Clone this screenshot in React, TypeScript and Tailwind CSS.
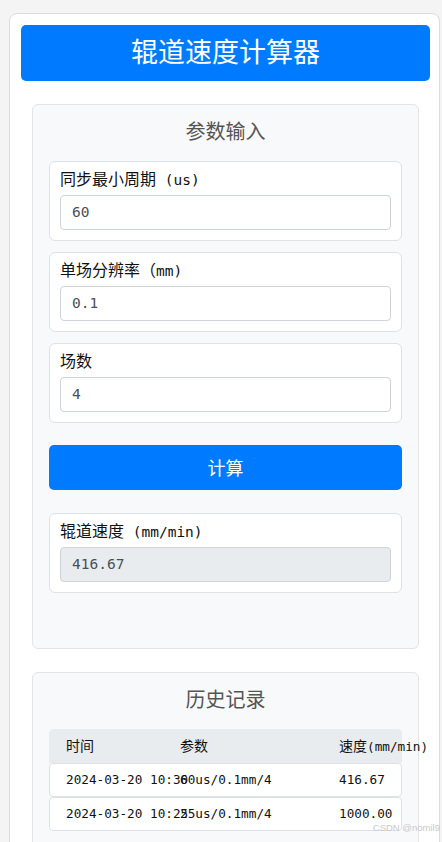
import React from "react";

const CJK = "font-['Noto_Sans_CJK_SC',sans-serif]";
const MONO = "font-['DejaVu_Sans_Mono','Noto_Sans_CJK_SC',monospace]";

function Label({ cn, latin }: { cn: string; latin?: string }) {
  return (
    <div className={`h-[20px] leading-[20px] mb-[7px] text-[16px] text-[#111] whitespace-pre ${CJK}`}>
      {cn}
      {latin ? <span className={`${MONO} text-[14.5px] whitespace-pre`}>{latin}</span> : null}
    </div>
  );
}

function Field({ cn, latin, value, disabled }: { cn: string; latin?: string; value: string; disabled?: boolean }) {
  return (
    <div className="border border-[#dee2e6] rounded-[6px] bg-white px-[10px] pt-[6px] pb-[10px]">
      <Label cn={cn} latin={latin} />
      <div
        className={`h-[35px] border border-[#ced4da] rounded-[4px] px-[11px] flex items-center text-[14.5px] text-[#495057] ${MONO} ${
          disabled ? "bg-[#e9ecef]" : "bg-white"
        }`}
      >
        {value}
      </div>
    </div>
  );
}

function Row({ a, b, c, header }: { a: React.ReactNode; b: React.ReactNode; c: React.ReactNode; header?: boolean }) {
  return (
    <div
      className={`h-[34px] grid grid-cols-[114px_159px_1fr] items-center pl-[16px] border whitespace-nowrap ${
        header ? "bg-[#e9ecef] border-[#e9ecef] rounded-t-[4px] text-[14px]" : "bg-white border-[#dee2e6] rounded-[4px] text-[12.7px]"
      } text-[#111]`}
    >
      <div className="whitespace-nowrap">{a}</div>
      <div className="whitespace-nowrap">{b}</div>
      <div className="whitespace-nowrap">{c}</div>
    </div>
  );
}

export default function App() {
  return (
    <div className="relative min-h-screen bg-[#f4f4f4] pt-[13px] pl-[9px] pr-[2px] pb-[20px]">
      <div className="w-[431px] border border-[#dcdcdc] rounded-[8px] bg-white pt-[11px] pl-[11px] pr-[9px] pb-[20px]">
        <div className={`h-[56px] bg-[#007bff] rounded-[5px] flex items-center justify-center text-white text-[27px] pb-[4px] ${CJK}`}>
          辊道速度计算器
        </div>

        <div className="mt-[23px] mx-[11px] border border-[#e2e5e8] rounded-[6px] bg-[#f8f9fa] px-[16px] pt-[16px] pb-[55px]">
          <div className={`h-[20px] leading-[20px] mb-[20px] text-center text-[20px] text-[#555] ${CJK}`}>参数输入</div>
          <div className="flex flex-col gap-[11px]">
            <Field cn="同步最小周期" latin=" (us)" value="60" />
            <Field cn="单场分辨率（" latin="mm)" value="0.1" />
            <Field cn="场数" value="4" />
          </div>
          <div className={`mt-[22px] h-[45px] bg-[#007bff] rounded-[5px] flex items-center justify-center text-white text-[18px] ${CJK}`}>
            计算
          </div>
          <div className="mt-[23px]">
            <Field cn="辊道速度" latin=" (mm/min)" value="416.67" disabled />
          </div>
        </div>

        <div className="mt-[23px] mx-[11px] border border-[#e2e5e8] rounded-[6px] bg-[#f8f9fa] px-[16px] pt-[16px] pb-[40px]">
          <div className={`h-[20px] leading-[20px] mb-[20px] text-center text-[20px] text-[#555] ${CJK}`}>历史记录</div>
          <div className={`${MONO}`}>
            <Row
              header
              a={<span className={CJK}>时间</span>}
              b={<span className={CJK}>参数</span>}
              c={
                <span>
                  <span className={`${CJK} text-[14px]`}>速度</span>
                  <span className="text-[12.7px]">(mm/min)</span>
                </span>
              }
            />
            <Row a="2024-03-20 10:30" b="60us/0.1mm/4" c="416.67" />
            <Row a="2024-03-20 10:25" b="25us/0.1mm/4" c="1000.00" />
          </div>
        </div>
      </div>
      <div className="absolute right-[2px] top-[822px] text-[9.5px] leading-[12px] text-[#c9c9c9] font-['Liberation_Sans',sans-serif] whitespace-nowrap">
        CSDN @nomil9
      </div>
    </div>
  );
}
